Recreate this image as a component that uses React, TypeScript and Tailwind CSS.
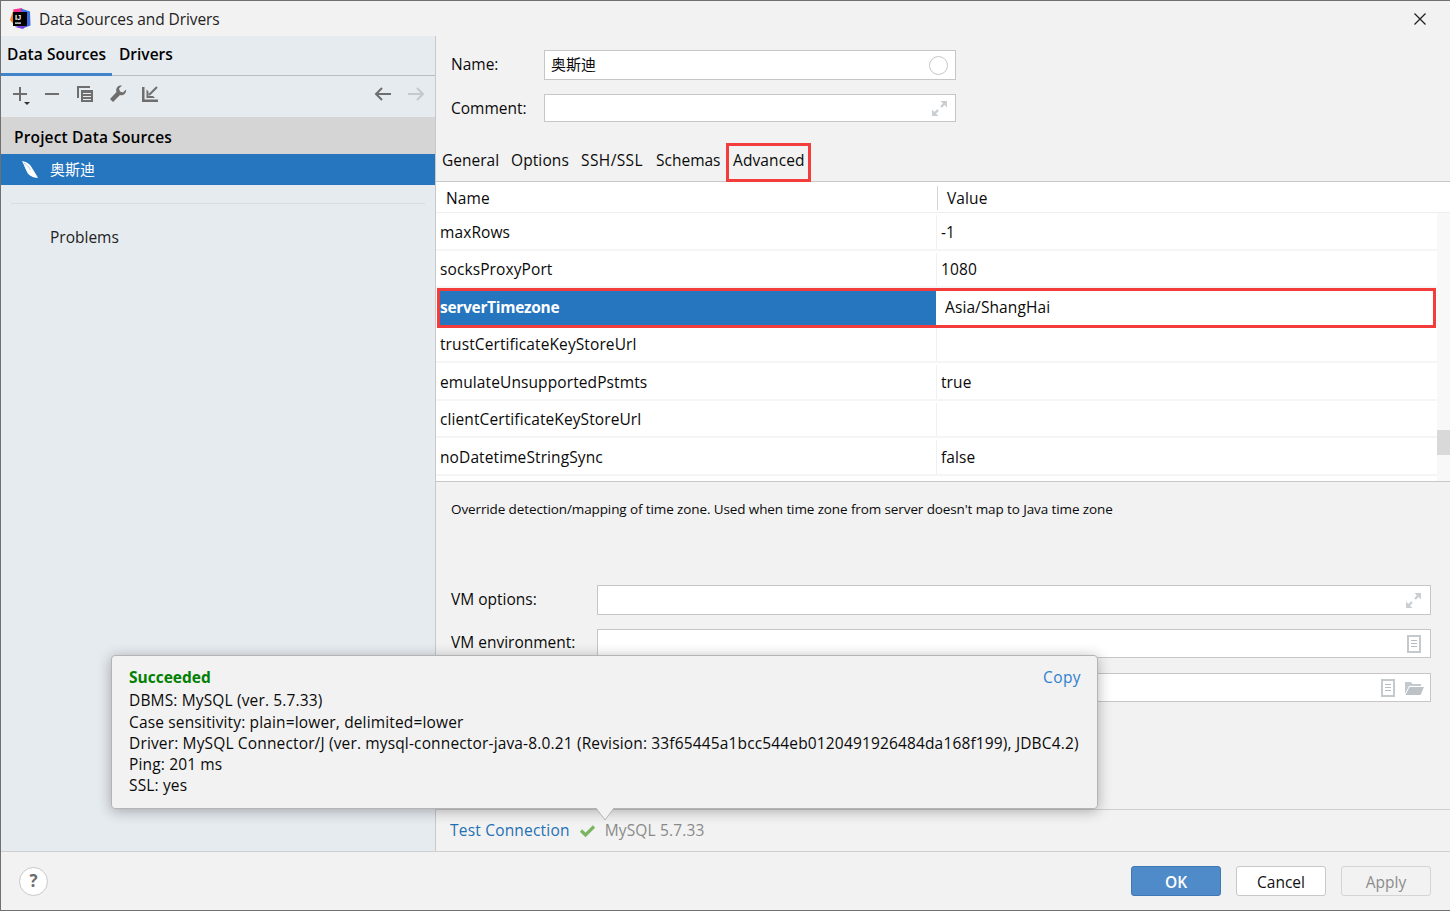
import React from "react";

const rows = [
  ["maxRows", "-1"],
  ["socksProxyPort", "1080"],
  ["serverTimezone", "Asia/ShangHai"],
  ["trustCertificateKeyStoreUrl", ""],
  ["emulateUnsupportedPstmts", "true"],
  ["clientCertificateKeyStoreUrl", ""],
  ["noDatetimeStringSync", "false"],
];

const Expand = () => (
  <svg width="17" height="17" viewBox="0 0 16 16" fill="#c9ced2">
    <path d="M9 1h6v6l-2.200-2.200-2.600 2.600-1.600-1.600 2.600-2.600z" />
    <path d="M1 15V9l2.200 2.200 2.600-2.600 1.600 1.600-2.600 2.600L7 15z" />
  </svg>
);
const Doc = () => (
  <svg width="14" height="18" viewBox="0 0 14 18">
    <rect x="1" y="1" width="12" height="16" fill="#fff" stroke="#c3c9cd" strokeWidth="2" />
    <path d="M4 5.500h6M4 8.500h6M4 11.500h6" stroke="#b5bbbf" strokeWidth="1.200" />
  </svg>
);
const Folder = () => (
  <svg width="20" height="16" viewBox="0 0 20 16">
    <path d="M1 2h6l1.500 2H17v2H5L1 14z" fill="#c3c9cd" />
    <path d="M5.500 7H20l-3.500 8H1.500z" fill="#bcc2c6" />
  </svg>
);

function Field({ w, h = "h-[30px]", pr = "pr-[7px]", children, icon }: { w: string; h?: string; pr?: string; children?: React.ReactNode; icon?: React.ReactNode }) {
  return (
    <div className={`${w} ${h} ${pr} bg-white border border-[#c6c6c6] flex items-center justify-between pl-[6px]`}>
      <span className="pb-[2px]">{children}</span>
      <span className="flex items-center gap-[9px]">{icon}</span>
    </div>
  );
}

export default function App() {
  return (
    <div className="relative w-[1450px] h-[911px] overflow-hidden bg-[#f2f2f2] text-[15.500px] leading-[20px] text-[#0a0a0a] border border-[#707070] border-r-0 [font-family:'Open_Sans','Noto_Sans_CJK_SC',sans-serif] flex flex-col">
      {/* Title bar */}
      <div className="h-[35px] shrink-0 flex items-center pl-[9px] bg-[#f2f2f2]">
        <svg width="21" height="21" viewBox="0 0 21 21">
          <path d="M3 1.500l9-1.500 2 6-9 5z" fill="#ff318c" />
          <path d="M0 12l3-9 6 8-3 8z" fill="#fc801d" />
          <path d="M11 0.500l9 3 .5 14-8 3z" fill="#3b6fe0" />
          <path d="M5 19l8 2 6-7z" fill="#7b3fe4" />
          <rect x="3" y="4" width="14" height="14" fill="#000" />
          <text x="5" y="11.500" fontSize="7.500" fontWeight="700" fill="#fff" fontFamily="Liberation Sans">IJ</text>
          <rect x="5" y="14.500" width="6" height="1.200" fill="#fff" />
        </svg>
        <span className="ml-[8px] text-[#222] tracking-[-0.08px]">Data Sources and Drivers</span>
        <svg className="ml-auto mr-[24px]" width="12" height="12" viewBox="0 0 12 12" stroke="#222" strokeWidth="1.300">
          <path d="M.5.5l11 11M11.500.5l-11 11" />
        </svg>
      </div>

      <div className="flex-1 flex min-h-0">
        {/* Sidebar */}
        <aside className="w-[435px] shrink-0 bg-[#e6ebf0] border-r border-[#c8c8c8] flex flex-col">
          <div className="h-[40px] shrink-0 flex border-b border-[#bcbcbc] font-semibold items-stretch">
            <div className="w-[111px] pl-[6px] pt-[8px] -mb-px border-b-[3px] border-[#4083c9] text-black tracking-[0.08px]">Data Sources</div>
            <div className="pl-[7px] pt-[8px] text-black">Drivers</div>
          </div>
          <div className="h-[41px] shrink-0 flex items-center pl-[12px] pr-[10px] pb-[5px]">
            <svg width="18" height="16" viewBox="0 0 18 16" className="overflow-visible">
              <path d="M0 8h14M7 1v14" stroke="#6e6e6e" strokeWidth="2" />
              <path d="M11 16h6l-3 3z" fill="#333" />
            </svg>
            <svg width="14" height="16" viewBox="0 0 14 16" className="ml-[14px]"><path d="M0 8h14" stroke="#6e6e6e" strokeWidth="2" /></svg>
            <svg width="16" height="16" viewBox="0 0 16 16" className="ml-[18px]">
              <path d="M0 0h13v2H2v10H0z" fill="#6e6e6e" />
              <path d="M4 4h12v12H4z" fill="#6e6e6e" />
              <path d="M6 7.500h8M6 10.500h8M6 13.500h8" stroke="#e6ebf0" strokeWidth="1" />
            </svg>
            <svg width="18" height="18" viewBox="0 0 18 18" className="ml-[16px]">
              <path d="M17 4.500l-3 3-3-1-1-3 3-3c-3-.6-6 1.500-5.800 5 0 .6.100 1 .3 1.500L1 14l3 3 7-7c3.500 1.300 6.800-2 6-5.500z" fill="#6e6e6e" />
            </svg>
            <svg width="16" height="16" viewBox="0 0 16 16" className="ml-[15px]">
              <path d="M0 1h2.500v12.500H16V16H0z" fill="#6e6e6e" />
              <path d="M15 1L7 9" stroke="#6e6e6e" strokeWidth="2" />
              <path d="M4.500 3.500v8.500h8.500l-2-2H6.500V5.500z" fill="#6e6e6e" />
            </svg>
            <svg className="ml-auto" width="18" height="14" viewBox="0 0 18 14" fill="none" stroke="#6e6e6e" strokeWidth="2">
              <path d="M17 7H2M8 1L2 7l6 6" />
            </svg>
            <svg width="18" height="14" viewBox="0 0 18 14" fill="none" stroke="#c5c9cd" strokeWidth="2" className="ml-[15px]">
              <path d="M1 7h15M10 1l6 6-6 6" />
            </svg>
          </div>
          <div className="h-[37px] shrink-0 bg-[#d5d5d5] flex items-center pl-[13px] pt-[2px] font-semibold text-black tracking-[0.15px]">Project Data Sources</div>
          <div className="h-[31px] shrink-0 bg-[#2675bf] flex items-center text-white">
            <svg width="18" height="19" viewBox="0 0 18 19" className="ml-[20px]">
              <path d="M1 1c5 1 8 3 10 7 2 3 4 6 6 10-5-.5-9-2-11-6C4 8 3 5 1 1z" fill="#fff" />
              <path d="M3 3c3 2 5 4 6.500 7" stroke="#a9d4f2" strokeWidth="1" fill="none" />
            </svg>
            <span className="ml-[11px] pb-[2px] text-[15px]">奥斯迪</span>
          </div>
          <div className="mt-[18px] mx-[10px] border-t border-[#d8dde1]" />
          <div className="ml-[49px] mt-[23px] text-[#222]">Problems</div>
        </aside>

        {/* Main */}
        <main className="flex-1 min-w-0 flex flex-col bg-[#f2f2f2]">
          <div className="flex items-center pt-[14px] pl-[15px] h-[44px]">
            <span className="w-[93px] pb-[2px]">Name:</span>
            <Field w="w-[412px]" icon={<span className="block w-[19px] h-[19px] rounded-full border border-[#c4c8cc] bg-white" />}><span className="text-[15px]">奥斯迪</span></Field>
          </div>
          <div className="flex items-center mt-[14px] pl-[15px] h-[28px]">
            <span className="w-[93px]">Comment:</span>
            <Field w="w-[412px]" h="h-[28px]" icon={<Expand />} />
          </div>
          <div className="flex items-end h-[60px] shrink-0 pl-[6px] border-b border-[#c8c8c8] whitespace-nowrap">
            <span className="w-[69px] pb-[11px]">General</span>
            <span className="w-[70px] pb-[11px] tracking-[0.1px]">Options</span>
            <span className="w-[75px] pb-[11px] tracking-[0.4px]">SSH/SSL</span>
            <span className="w-[70px] pb-[11px]">Schemas</span>
            <span className="w-[85px] h-[39px] -mb-px pt-[4px] pl-[4px] border-[3px] border-[#f33c3c] tracking-[0.1px]">Advanced</span>
          </div>

          {/* Table */}
          <div className="relative h-[300px] shrink-0 bg-white border-b border-[#c8c8c8] overflow-hidden tracking-[0.1px]">
            <div className="absolute right-0 top-[31px] bottom-0 w-[13px] bg-[#f8f8f8]" />
            <div className="h-[31px] flex items-center border-b border-[#eeeeee] pt-[1px]">
              <span className="w-[502px] pl-[10px] border-r border-[#d4d4d4] h-[24px] flex items-center">Name</span>
              <span className="pl-[9px]">Value</span>
            </div>
            {rows.map(([n, v]) => {
              const sel = n === "serverTimezone";
              return sel ? (
                <div key={n} className="relative z-10 h-[40px] -mb-[2.500px] ml-[1px] mr-[14px] flex items-stretch border-[3px] border-[#f33c3c] bg-white">
                  <span className="w-[496px] bg-[#2675bf] text-white font-bold flex items-center pb-[2px] tracking-[-0.3px]">{n}</span>
                  <span className="flex items-center pl-[9px] pb-[2px]">{v}</span>
                </div>
              ) : (
                <div key={n} className="relative h-[37.500px] pt-[2px] flex items-center border-b-2 border-[#f5f5f5] mr-[13px] bg-white">
                  <span className="w-[501px] pl-[4px] h-full flex items-center border-r border-[#f0f0f0]">{n}</span>
                  <span className="pl-[4px]">{v}</span>
                </div>
              );
            })}
            <div className="absolute right-0 top-[248px] w-[13px] h-[25px] bg-[#d9d9d9]" />
          </div>

          <div className="pl-[15px] pt-[17px] text-[13.500px] tracking-[-0.11px] h-[103px] shrink-0">
            Override detection/mapping of time zone. Used when time zone from server doesn't map to Java time zone
          </div>

          <div className="flex items-center pl-[15px] h-[30px] shrink-0">
            <span className="w-[146px] pb-[2px]">VM options:</span>
            <Field w="w-[834px]" pr="pr-[8px]" icon={<Expand />} />
          </div>
          <div className="flex items-start pl-[15px] h-[30px] mt-[14px] shrink-0">
            <span className="w-[146px] pt-[3px]">VM environment:</span>
            <Field w="w-[834px]" h="h-[29px]" pr="pr-[9px]" icon={<Doc />} />
          </div>
          <div className="flex items-start pl-[15px] h-[30px] mt-[14px] shrink-0">
            <span className="w-[146px] pt-[3px]">Working directory:</span>
            <Field w="w-[834px]" h="h-[29px]" pr="pr-[6px]" icon={<><Doc /><Folder /></>} />
          </div>

          <div className="flex-1" />
          <div className="h-[42px] shrink-0 border-t border-[#cfcfcf] flex items-center pl-[14px] pb-[2px] bg-[#f2f2f2]">
            <span className="text-[#2470b3] tracking-[0.2px]">Test Connection</span>
            <svg width="17" height="13" viewBox="0 0 17 13" className="ml-[9px] mt-[2px]">
              <path d="M2 6.500l4.500 4.500L15 2.500" fill="none" stroke="#7bb662" strokeWidth="3.200" />
            </svg>
            <span className="ml-[9px] text-[#8a8a8a] tracking-[0.15px]">MySQL 5.7.33</span>
          </div>
        </main>
      </div>

      {/* Bottom bar */}
      <div className="h-[59px] shrink-0 border-t border-[#cfcfcf] flex items-center bg-[#f2f2f2] pr-[19px]">
        <div className="ml-[18px] w-[29px] h-[29px] rounded-full bg-white border border-[#c8c8c8] flex items-center justify-center font-bold text-[17px] text-[#6e6e6e]">?</div>
        <div className="ml-auto w-[90px] h-[30px] rounded-[3px] bg-[#4f8ac9] border border-[#3f78b5] text-white font-semibold flex items-center justify-center pt-[1px]">OK</div>
        <div className="ml-[15px] w-[90px] h-[30px] rounded-[3px] bg-white border border-[#c8c8c8] flex items-center justify-center text-[#111] pt-[1px]">Cancel</div>
        <div className="ml-[15px] w-[90px] h-[30px] rounded-[3px] border border-[#d4d4d4] flex items-center justify-center text-[#8c8c8c] pt-[1px]">Apply</div>
      </div>

      {/* Popup */}
      <div className="absolute left-[110px] top-[654px] w-[987px] h-[154px] bg-[#f2f2f2] border border-[#b4b4b4] rounded-[4px] shadow-[0_2px_14px_rgba(0,0,0,0.3)] pl-[17px] pt-[11px] leading-[21.300px] tracking-[0.15px]">
        <div className="font-bold text-[#008000] tracking-[0px] mb-[2px]">Succeeded</div>
        <div>DBMS: MySQL (ver. 5.7.33)</div>
        <div>Case sensitivity: plain=lower, delimited=lower</div>
        <div>Driver: MySQL Connector/J (ver. mysql-connector-java-8.0.21 (Revision: 33f65445a1bcc544eb0120491926484da168f199), JDBC4.2)</div>
        <div>Ping: 201 ms</div>
        <div>SSL: yes</div>
        <span className="absolute right-[16px] top-[11px] text-[#2f80cf] tracking-[0.4px]">Copy</span>
        <svg className="absolute left-[483px] -bottom-[13px]" width="20" height="13" viewBox="0 0 20 13">
          <path d="M1 0l9 12 9-12" fill="#f2f2f2" stroke="#b4b4b4" />
        </svg>
      </div>
    </div>
  );
}
